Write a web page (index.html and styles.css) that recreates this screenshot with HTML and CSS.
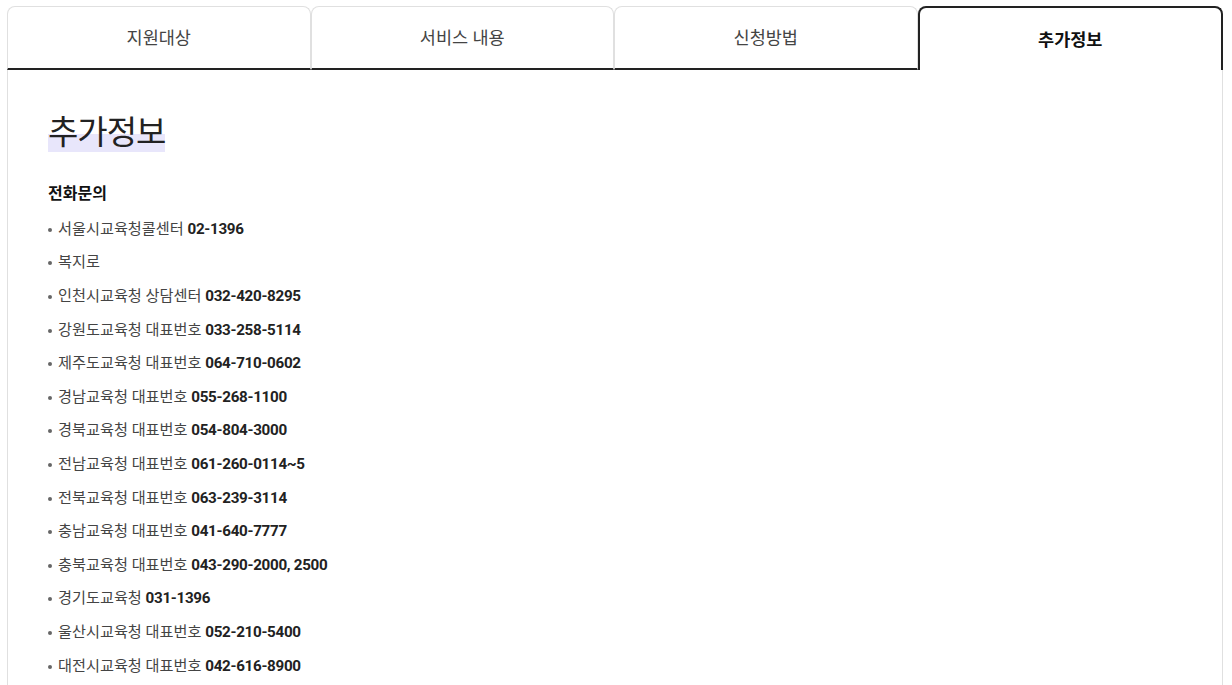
FILE: index.html
```html
<!DOCTYPE html>
<html lang="ko">
<head>
<meta charset="utf-8">
<link rel="stylesheet" href="styles.css">
</head>
<body>
<div class="wrap">
  <div class="tabs">
    <div class="tab">지원대상</div>
    <div class="tab">서비스 내용</div>
    <div class="tab">신청방법</div>
    <div class="tab active">추가정보</div>
  </div>
  <div class="panel">
    <h2 class="title"><span class="mark">추가정보</span></h2>
    <h3 class="sub">전화문의</h3>
    <ul class="list">
      <li>서울시교육청콜센터 <b>02-1396</b></li>
      <li>복지로</li>
      <li>인천시교육청 상담센터 <b>032-420-8295</b></li>
      <li>강원도교육청 대표번호 <b>033-258-5114</b></li>
      <li>제주도교육청 대표번호 <b>064-710-0602</b></li>
      <li>경남교육청 대표번호 <b>055-268-1100</b></li>
      <li>경북교육청 대표번호 <b>054-804-3000</b></li>
      <li>전남교육청 대표번호 <b>061-260-0114~5</b></li>
      <li>전북교육청 대표번호 <b>063-239-3114</b></li>
      <li>충남교육청 대표번호 <b>041-640-7777</b></li>
      <li>충북교육청 대표번호 <b>043-290-2000, 2500</b></li>
      <li>경기도교육청 <b>031-1396</b></li>
      <li>울산시교육청 대표번호 <b>052-210-5400</b></li>
      <li>대전시교육청 대표번호 <b>042-616-8900</b></li>
    </ul>
  </div>
</div>
</body>
</html>
```
FILE: styles.css
```css
* { box-sizing: border-box; }
html, body { margin: 0; padding: 0; background: #fff; }
body {
  font-family: Roboto, "Noto Sans CJK KR", sans-serif;
  color: #222;
}
.wrap {
  padding: 6px 9px 0 7px;
}
.tabs {
  display: flex;
}
.tab {
  flex: 1;
  height: 64px;
  display: flex;
  align-items: center;
  justify-content: center;
  font-size: 17.5px;
  color: #444;
  border: 1px solid #e0e0e0;
  border-bottom: 2px solid #222;
  border-radius: 8px 8px 0 0;
  padding-bottom: 2px;
}
.tab.active {
  border: 2px solid #222;
  border-bottom: none;
  font-weight: 700;
  color: #111;
}
.panel {
  border: 1px solid #e0e0e0;
  border-top: none;
  padding: 42px 40px 40px 40px;
  min-height: 700px;
}
.title {
  margin: 0;
  font-size: 33px;
  font-weight: 400;
  color: #222;
  line-height: 1.3;
  letter-spacing: -1px;
}
.mark {
  background: linear-gradient(transparent 55%, #e8e6fb 55%);
}
.sub {
  margin: 25px 0 15px;
  font-size: 16px;
  font-weight: 700;
  color: #111;
}
.list {
  list-style: none;
  margin: 0;
  padding: 0;
}
.list li {
  position: relative;
  padding-left: 10px;
  font-size: 15.2px;
  color: #444;
  line-height: 20px;
  margin-bottom: 13.6px;
}
.list li::before {
  content: "";
  position: absolute;
  left: 0;
  top: 9px;
  width: 4px;
  height: 4px;
  border-radius: 50%;
  background: #666;
}
.list b {
  color: #222;
  font-weight: 700;
  letter-spacing: -0.3px;
}
```
